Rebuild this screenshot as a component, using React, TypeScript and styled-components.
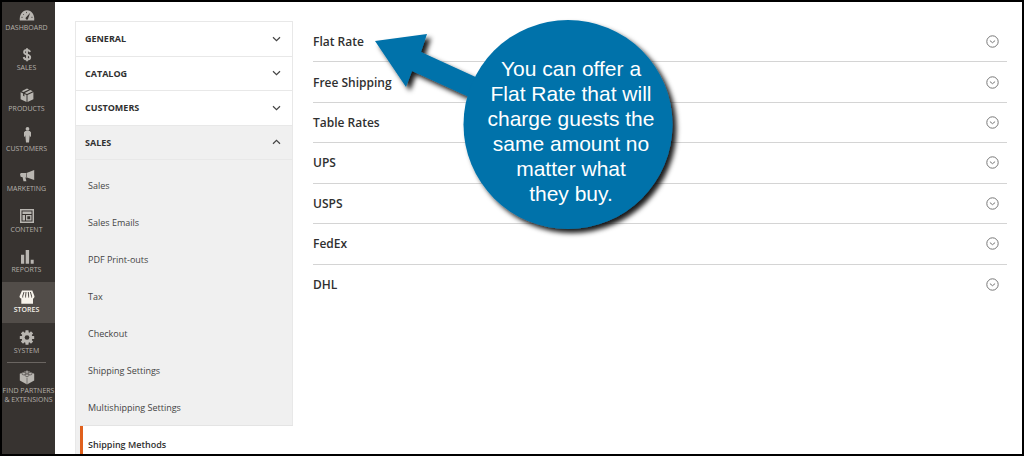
import React from "react";
import styled, { createGlobalStyle } from "styled-components";

const GlobalStyle = createGlobalStyle`
  *, *::before, *::after { box-sizing: border-box; }
  body { margin: 0; background: #fff; font-family: "Open Sans", sans-serif; color: #303030; }
  ul { margin: 0; padding: 0; list-style: none; }
  a { color: inherit; text-decoration: none; }
  button { font: inherit; color: inherit; cursor: pointer; }
`;

const Frame = styled.div`
  position: relative;
  display: flex;
  height: 100vh;
  border: 2px solid #000;
  overflow: hidden;
`;

const Sidebar = styled.nav`
  flex: none;
  width: 53px;
  margin-top: -2px;
  background: #373330;
  border-top: 2px solid #000;
`;

const MenuList = styled.ul`
  display: grid;
  grid-auto-rows: 1fr;
  height: 363px;
  margin-top: -2px;
`;

const MenuLink = styled.a<{ $active?: boolean }>`
  display: flex;
  flex-direction: column;
  align-items: center;
  height: 100%;
  padding: 6px 4px 0 0;
  font-size: 7px;
  font-weight: ${(p) => (p.$active ? 600 : 400)};
  line-height: 9px;
  text-align: center;
  white-space: nowrap;
  color: ${(p) => (p.$active ? "#f7f3eb" : "#b5b1ab")};
  background: ${(p) => (p.$active ? "#524d49" : "transparent")};

  svg {
    flex: none;
    margin-bottom: 1px;
    color: ${(p) => (p.$active ? "#f7f3eb" : "#b9b6b1")};
  }
`;

const Partners = styled.div`
  margin-top: -1px;

  &::before {
    content: "";
    display: block;
    height: 1px;
    margin: 0 9px 0 5px;
    background: #6a6561;
  }

  span { padding-left: 4px; }
`;

const Page = styled.main`
  flex: 1;
  min-width: 0;
  display: flex;
  align-items: flex-start;
  gap: 20px;
  padding: 19px 15px 0 20px;
`;

const ConfigNav = styled.nav`
  flex: none;
  width: 218px;
  border: 1px solid #e8e8e8;
  background: #f0f0f0;
`;

const Sections = styled.ul`
  display: grid;
  grid-auto-rows: 1fr;
  height: 138px;
`;

const SectionButton = styled.button<{ $open?: boolean }>`
  display: flex;
  align-items: center;
  justify-content: space-between;
  width: 100%;
  height: 100%;
  padding: 0 11px 0 9px;
  border: 0;
  border-bottom: 1px solid #e8e8e8;
  background: ${(p) => (p.$open ? "#f0f0f0" : "#fff")};
  font-size: 9px;
  font-weight: 700;
`;

const SubList = styled.ul`
  padding: 7px 0 20px 4px;
`;

const SubLink = styled.a<{ $active?: boolean }>`
  display: flex;
  align-items: center;
  height: 37px;
  padding-left: ${(p) => (p.$active ? "5px" : "8px")};
  margin-right: ${(p) => (p.$active ? "-1px" : "0")};
  border-left: ${(p) => (p.$active ? "3px solid #e0601c" : "0")};
  background: ${(p) => (p.$active ? "#fff" : "transparent")};
  box-shadow: ${(p) => (p.$active ? "0 -1px 0 #e4e4e4" : "none")};
  font-size: 9px;
  font-weight: ${(p) => (p.$active ? 600 : 400)};
  color: ${(p) => (p.$active ? "#303030" : "#444")};
`;

const Methods = styled.ul`
  flex: 1;
  min-width: 0;
  display: grid;
  grid-auto-rows: 1fr;
  height: 283px;

  li + li { border-top: 1px solid #d4d4d4; }
`;

const MethodButton = styled.button`
  display: flex;
  align-items: center;
  justify-content: space-between;
  width: 100%;
  height: 100%;
  padding: 0 8px 0 0;
  border: 0;
  background: none;
  font-size: 12px;
  font-weight: 600;
`;

const Callout = styled.aside`
  position: absolute;
  top: 10px;
  left: 363px;
  width: 330px;
  height: 236px;
  pointer-events: none;

  svg { position: absolute; inset: 0; }
`;

const CalloutText = styled.p`
  position: absolute;
  top: 44px;
  left: 101px;
  width: 210px;
  margin: 0;
  font-family: "Liberation Sans", Arial, sans-serif;
  font-size: 21px;
  line-height: 25px;
  text-align: center;
  color: #fff;
`;

const Glyph = ({ children }: { children: React.ReactNode }) => (
  <svg width="16" height="16" viewBox="0 0 16 16" fill="currentColor" aria-hidden="true">
    {children}
  </svg>
);

const DARK = "#373330";

const DashboardIcon = () => (
  <Glyph>
    <path d="M.8 14.600C.2 8.500 3.400 4.200 8 4.200s7.800 4.300 7.200 10.400z" />
    <path d="M11.200 6.800 9.200 12.300a1.300 1.300 0 1 1-2.100-1z" fill={DARK} />
    <path d="M2.400 11.300h1.300M4 8.100l.8.7M7.500 5.900v1.200M12.300 11.300h1.300" stroke={DARK} strokeWidth=".8" />
  </Glyph>
);
const SalesIcon = () => (
  <Glyph>
    <path
      d="M11 6.100C10.600 4.600 9.500 4 8 4c-1.700 0-2.900.8-2.900 2.200 0 3.300 6.100 1.700 6.100 5 0 1.500-1.300 2.300-3.100 2.300-1.900 0-3.100-.9-3.400-2.500M8 2.200v13"
      fill="none" stroke="currentColor" strokeWidth="1.900"
    />
  </Glyph>
);
const ProductsIcon = () => (
  <Glyph>
    <path d="m8 1.600 2 .8-5.500 2.700-2-.9zM11.300 3l2.500 1.200L8 7 5.700 5.900zM1.600 5.300l2.500 1.100v2.400l1.300.7V7l2.100 1v7L1.600 12.200zM14.400 5.300v6.900L8.500 15V8z" />
  </Glyph>
);
const CustomersIcon = () => (
  <Glyph>
    <g transform="translate(0 -.4)">
      <circle cx="8.500" cy="2.300" r="1.900" />
      <path d="M6.300 4.500h4.400l1.300 1.200v4l-1 .6-.5-2v2.300L10 15.800H7l-.5-5V8.300l-.5 2-1-.6v-4z" />
    </g>
  </Glyph>
);
const MarketingIcon = () => (
  <Glyph>
    <path d="M15.200 3v10L8 10.500H6.400l1 3.800H4.500l-.9-4-2-.5L1 6.900l1-1h5.500z" />
    <path d="M7.500 6.200v4.100" stroke={DARK} strokeWidth=".6" />
  </Glyph>
);
const ContentIcon = () => (
  <Glyph>
    <path fillRule="evenodd" d="M1 1h14v14H1zm1.500 1.500v11h11v-11z" />
    <path d="M3.500 3.500h9v2.500h-9zM3.500 7h2.500v5.500H3.500zM7 7h5.500v5.500H7zM8.300 8.300v2.900h2.900V8.300z" fillRule="evenodd" />
  </Glyph>
);
const ReportsIcon = () => (
  <Glyph>
    <path d="M2 6.700h3.200v9H2zM6.700 2h3.400v13.700H6.700zM11.700 11.700h3v4h-3z" />
  </Glyph>
);
const StoresIcon = () => (
  <Glyph>
    <path d="M3 2.500h10.300l2.200 5.700c0 1.700-1 2.200-1.500 2.300v5.200H2.300v-5.200C1 10.200.5 9.400.5 8.200z" />
    <path d="M5 4 3.700 8.200v1.300M7 4l-.4 4.200v1.300M9.300 4l.3 4.200v1.300M11.400 4l1.200 4.200v1.300" fill="none" stroke="#524d49" />
  </Glyph>
);
const SystemIcon = () => (
  <Glyph>
    <g transform="translate(8 8.500)">
      {[0, 45, 90, 135].map((angle) => (
        <rect key={angle} x="-1.600" y="-7.200" width="3.200" height="14.400" rx=".4" transform={`rotate(${angle})`} />
      ))}
      <circle r="5.400" />
      <circle r="2.300" fill={DARK} />
    </g>
  </Glyph>
);
const PartnersIcon = () => (
  <Glyph>
    <path d="M8 1.500 15.200 4.800v6.800L8 15.500.8 11.600V4.800z" />
    <path d="M8 8.600v6.900" fill="none" stroke={DARK} strokeWidth=".5" />
    <g fill="currentColor" stroke={DARK} strokeWidth=".6">
      <ellipse cx="8" cy="3" rx="1.900" ry="1.200" />
      <ellipse cx="4.800" cy="4.700" rx="1.900" ry="1.200" />
      <ellipse cx="11.200" cy="4.700" rx="1.900" ry="1.200" />
      <ellipse cx="8" cy="6.300" rx="1.900" ry="1.200" />
    </g>
  </Glyph>
);

const Chevron = ({ up }: { up?: boolean }) => (
  <svg width="9" height="6" viewBox="0 0 9 6" fill="none" stroke="#444" strokeWidth="1.200" aria-hidden="true">
    <path d={up ? "M1 4.700 4.500 1.300 8 4.700" : "M1 1.300 4.500 4.700 8 1.300"} />
  </svg>
);

const CircleChevron = () => (
  <svg width="13" height="13" viewBox="0 0 13 13" fill="none" stroke="#777" aria-hidden="true">
    <circle cx="6.500" cy="6.500" r="5.700" />
    <path d="M3.900 5.600 6.500 7.700 9.100 5.600" />
  </svg>
);

const menu = [
  { label: "DASHBOARD", Icon: DashboardIcon },
  { label: "SALES", Icon: SalesIcon },
  { label: "PRODUCTS", Icon: ProductsIcon },
  { label: "CUSTOMERS", Icon: CustomersIcon },
  { label: "MARKETING", Icon: MarketingIcon },
  { label: "CONTENT", Icon: ContentIcon },
  { label: "REPORTS", Icon: ReportsIcon },
  { label: "STORES", Icon: StoresIcon, active: true },
  { label: "SYSTEM", Icon: SystemIcon },
];

const sections = ["GENERAL", "CATALOG", "CUSTOMERS", "SALES"];
const pages = [
  "Sales", "Sales Emails", "PDF Print-outs", "Tax", "Checkout",
  "Shipping Settings", "Multishipping Settings", "Shipping Methods",
];
const methods = ["Flat Rate", "Free Shipping", "Table Rates", "UPS", "USPS", "FedEx", "DHL"];

export default function App() {
  return (
    <Frame>
      <GlobalStyle />
      <Sidebar aria-label="Main">
        <MenuList>
          {menu.map(({ label, Icon, active }) => (
            <li key={label}>
              <MenuLink href="#" $active={active}>
                <Icon />
                {label}
              </MenuLink>
            </li>
          ))}
        </MenuList>
        <Partners>
          <MenuLink href="#">
            <PartnersIcon />
            <span>FIND PARTNERS<br />&amp; EXTENSIONS</span>
          </MenuLink>
        </Partners>
      </Sidebar>
      <Page>
        <ConfigNav aria-label="Configuration">
          <Sections>
            {sections.map((name) => (
              <li key={name}>
                <SectionButton type="button" $open={name === "SALES"} aria-expanded={name === "SALES"}>
                  {name}
                  <Chevron up={name === "SALES"} />
                </SectionButton>
              </li>
            ))}
          </Sections>
          <SubList>
            {pages.map((name) => (
              <li key={name}>
                <SubLink href="#" $active={name === "Shipping Methods"}>{name}</SubLink>
              </li>
            ))}
          </SubList>
        </ConfigNav>
        <Methods>
          {methods.map((name) => (
            <li key={name}>
              <MethodButton type="button" aria-expanded={false}>
                {name}
                <CircleChevron />
              </MethodButton>
            </li>
          ))}
        </Methods>
      </Page>
      <Callout>
        <svg width="330" height="236" viewBox="365 12 330 236" aria-hidden="true">
          <defs>
            <filter id="shadow" x="-10%" y="-10%" width="125%" height="125%">
              <feDropShadow dx="4" dy="4" stdDeviation="2.500" floodColor="#000" floodOpacity=".9" />
            </filter>
          </defs>
          <g fill="#0272aa" filter="url(#shadow)">
            <path d="M375 41 427 34 421 52 480 79V102L412 71 406 87z" />
            <circle cx="568" cy="124.500" r="104.500" />
          </g>
        </svg>
        <CalloutText>
          You can offer a<br />Flat Rate that will<br />charge guests the<br />same amount no<br />matter what<br />they buy.
        </CalloutText>
      </Callout>
    </Frame>
  );
}
